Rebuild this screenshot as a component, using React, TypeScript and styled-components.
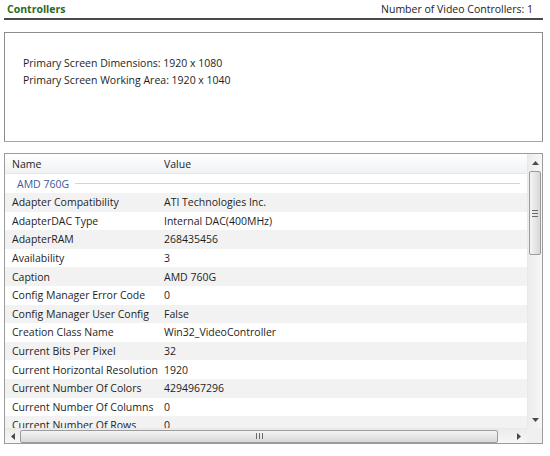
import React from "react";
import styled, { createGlobalStyle } from "styled-components";

const GlobalStyle = createGlobalStyle`
  html, body {
    margin: 0;
    padding: 0;
    background: #ffffff;
  }
  body {
    font-family: "Open Sans", "Noto Sans", sans-serif;
    font-size: 10.5px;
    color: #1e1e1e;
  }
`;

const Page = styled.div`
  width: 539px;
  padding: 0 7px 0 4px;
  display: flex;
  flex-direction: column;
`;

const Header = styled.div`
  display: flex;
  justify-content: space-between;
  align-items: center;
  height: 18px;
  padding: 0 10px 0 3px;
  border-bottom: 2px solid #4b4b4b;
`;

const Title = styled.span`
  font-weight: 700;
  color: #2b6a1d;
`;

const Count = styled.span`
  color: #222;
`;

const InfoBox = styled.div`
  margin-top: 12px;
  height: 110px;
  border: 1px solid #8c8c8c;
  border-bottom-color: #a8a8a8;
  padding: 22px 0 0 18px;
  box-sizing: border-box;
  line-height: 16.5px;
`;

const Grid = styled.div`
  margin-top: 11px;
  height: 291px;
  border: 1px solid #9c9c9c;
  box-sizing: border-box;
  display: grid;
  grid-template-columns: 1fr 15px;
  grid-template-rows: 1fr 15px;
  overflow: hidden;
`;

const Body = styled.div`
  overflow: hidden;
  display: flex;
  flex-direction: column;
`;

const HeadRow = styled.div`
  display: flex;
  height: 20px;
  align-items: center;
  flex: none;
  background: linear-gradient(#ffffff, #f1f2f4);
  border-bottom: 1px solid #e4e6ea;
  box-sizing: border-box;
`;

const Row = styled.div<{ $shade: boolean }>`
  display: flex;
  height: 18.6px;
  align-items: center;
  flex: none;
  background: ${({ $shade }) => ($shade ? "#f2f2f2" : "#ffffff")};
`;

const NameCell = styled.span`
  width: 152px;
  padding-left: 7px;
  white-space: nowrap;
  flex: none;
`;

const ValueCell = styled.span`
  white-space: nowrap;
`;

const GroupRow = styled.div`
  display: flex;
  align-items: center;
  height: 19px;
  flex: none;
  padding-left: 12px;
  color: #3a5a9c;
`;

const GroupLine = styled.div`
  flex: 1;
  height: 1px;
  background: #d3d3d3;
  margin: 0 7px 0 6px;
`;

const VScroll = styled.div`
  display: flex;
  flex-direction: column;
  align-items: center;
  background: linear-gradient(90deg, #ececec, #f7f7f7);
  border-left: 1px solid #e8e8e8;
`;

const HScroll = styled.div`
  display: flex;
  align-items: center;
  background: linear-gradient(#ececec, #f7f7f7);
  border-top: 1px solid #e8e8e8;
`;

const ArrowBtn = styled.div<{ $long?: number }>`
  width: ${({ $long }) => ($long ? `${$long}px` : "15px")};
  height: 15px;
  flex: none;
  display: flex;
  align-items: center;
  justify-content: center;
`;

const VArrowBtn = styled.div<{ $h: number }>`
  width: 15px;
  height: ${({ $h }) => $h}px;
  flex: none;
  display: flex;
  align-items: center;
  justify-content: center;
`;

const Spacer = styled.div`
  flex: 1;
`;

const VThumb = styled.div`
  width: 12px;
  height: 84px;
  flex: none;
  border: 1px solid #9b9b9b;
  border-radius: 2px;
  box-sizing: border-box;
  background: linear-gradient(90deg, #f4f4f4, #e6e6e6 50%, #d8d8d8);
  display: flex;
  align-items: center;
  justify-content: center;
`;

const HThumb = styled.div`
  width: 478px;
  height: 13px;
  flex: none;
  border: 1px solid #9b9b9b;
  border-radius: 2px;
  box-sizing: border-box;
  background: linear-gradient(#f4f4f4, #e6e6e6 50%, #d8d8d8);
  display: flex;
  align-items: center;
  justify-content: center;
`;

const Corner = styled.div`
  background: #f0f0f0;
`;

const Tri = ({ dir }: { dir: "up" | "down" | "left" | "right" }) => {
  const pts = {
    up: "0,4 3.5,0 7,4",
    down: "0,0 3.5,4 7,0",
    left: "4,0 0,3.5 4,7",
    right: "0,0 4,3.5 0,7",
  }[dir];
  const vertical = dir === "up" || dir === "down";
  return (
    <svg width={vertical ? 7 : 4} height={vertical ? 4 : 7} viewBox={vertical ? "0 0 7 4" : "0 0 4 7"}>
      <polygon points={pts} fill="#4a4a4a" />
    </svg>
  );
};

const Grip = ({ vertical }: { vertical: boolean }) =>
  vertical ? (
    <svg width="6" height="7" viewBox="0 0 6 7">
      <rect x="0" y="0" width="6" height="1" fill="#6a6a6a" />
      <rect x="0" y="3" width="6" height="1" fill="#6a6a6a" />
      <rect x="0" y="6" width="6" height="1" fill="#6a6a6a" />
    </svg>
  ) : (
    <svg width="7" height="6" viewBox="0 0 7 6">
      <rect x="0" y="0" width="1" height="6" fill="#6a6a6a" />
      <rect x="3" y="0" width="1" height="6" fill="#6a6a6a" />
      <rect x="6" y="0" width="1" height="6" fill="#6a6a6a" />
    </svg>
  );

const rows: [string, string][] = [
  ["Adapter Compatibility", "ATI Technologies Inc."],
  ["AdapterDAC Type", "Internal DAC(400MHz)"],
  ["AdapterRAM", "268435456"],
  ["Availability", "3"],
  ["Caption", "AMD 760G"],
  ["Config Manager Error Code", "0"],
  ["Config Manager User Config", "False"],
  ["Creation Class Name", "Win32_VideoController"],
  ["Current Bits Per Pixel", "32"],
  ["Current Horizontal Resolution", "1920"],
  ["Current Number Of Colors", "4294967296"],
  ["Current Number Of Columns", "0"],
  ["Current Number Of Rows", "0"],
];

export default function App() {
  return (
    <Page>
      <GlobalStyle />
      <Header>
        <Title>Controllers</Title>
        <Count>Number of Video Controllers: 1</Count>
      </Header>
      <InfoBox>
        <div>Primary Screen Dimensions: 1920 x 1080</div>
        <div>Primary Screen Working Area: 1920 x 1040</div>
      </InfoBox>
      <Grid>
        <Body>
          <HeadRow>
            <NameCell>Name</NameCell>
            <ValueCell>Value</ValueCell>
          </HeadRow>
          <GroupRow>
            AMD 760G
            <GroupLine />
          </GroupRow>
          {rows.map(([name, value], i) => (
            <Row key={name} $shade={i % 2 === 0}>
              <NameCell>{name}</NameCell>
              <ValueCell>{value}</ValueCell>
            </Row>
          ))}
        </Body>
        <VScroll>
          <VArrowBtn $h={17}>
            <Tri dir="up" />
          </VArrowBtn>
          <VThumb>
            <Grip vertical />
          </VThumb>
          <Spacer />
          <VArrowBtn $h={17}>
            <Tri dir="down" />
          </VArrowBtn>
        </VScroll>
        <HScroll>
          <ArrowBtn>
            <Tri dir="left" />
          </ArrowBtn>
          <HThumb>
            <Grip vertical={false} />
          </HThumb>
          <Spacer />
          <ArrowBtn $long={17}>
            <Tri dir="right" />
          </ArrowBtn>
        </HScroll>
        <Corner />
      </Grid>
    </Page>
  );
}
